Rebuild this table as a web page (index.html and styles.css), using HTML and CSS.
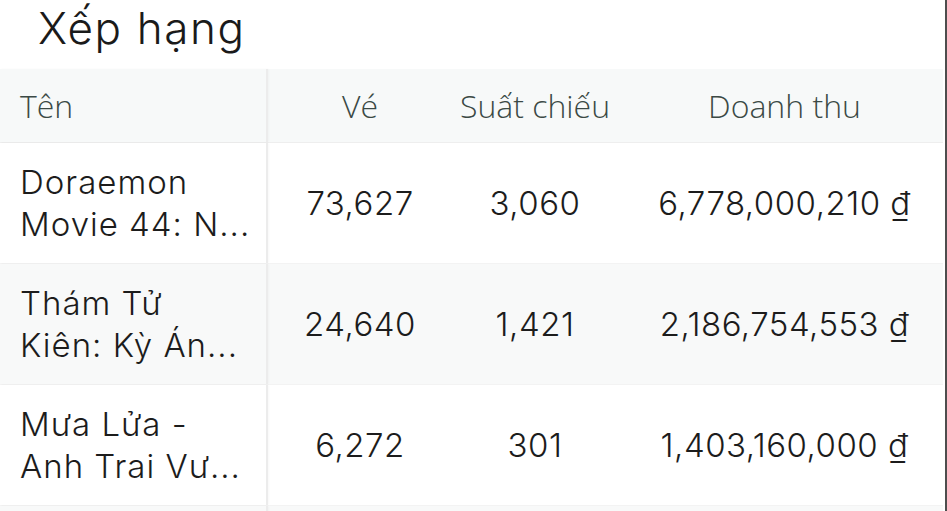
FILE: index.html
```html
<!DOCTYPE html>
<html lang="vi">
<head>
<meta charset="utf-8">
<title>Xếp hạng</title>
<link rel="stylesheet" href="styles.css">
</head>
<body>
<div class="frame">
  <h1 class="title">Xếp hạng</h1>
  <div class="table">
    <div class="row head">
      <div class="cell name">Tên</div>
      <div class="cell">Vé</div>
      <div class="cell">Suất chiếu</div>
      <div class="cell money">Doanh thu</div>
    </div>
    <div class="row">
      <div class="cell name"><span class="clamp">Doraemon<br>Movie 44: N...</span></div>
      <div class="cell">73,627</div>
      <div class="cell">3,060</div>
      <div class="cell money">6,778,000,210 ₫</div>
    </div>
    <div class="row alt">
      <div class="cell name"><span class="clamp">Thám Tử<br>Kiên: Kỳ Án...</span></div>
      <div class="cell">24,640</div>
      <div class="cell">1,421</div>
      <div class="cell money">2,186,754,553 ₫</div>
    </div>
    <div class="row">
      <div class="cell name"><span class="clamp">Mưa Lửa -<br>Anh Trai Vư...</span></div>
      <div class="cell">6,272</div>
      <div class="cell">301</div>
      <div class="cell money">1,403,160,000 ₫</div>
    </div>
    <div class="row alt tail">
      <div class="cell name"></div>
      <div class="cell"></div>
      <div class="cell"></div>
      <div class="cell money"></div>
    </div>
  </div>
</div>
</body>
</html>
```

FILE: styles.css
```css
html, body {
  margin: 0;
  padding: 0;
  background: #ffffff;
}
body {
  font-family: Inter, "Noto Sans", sans-serif;
  color: #1c1c1c;
  overflow: hidden;
}
.frame {
  width: 943px;
  height: 511px;
  border-right: 2px solid #4d4d4d;
  padding-right: 2px;
  overflow: hidden;
}
.title {
  margin: 0;
  padding: 4px 0 0 38px;
  height: 65px;
  font-weight: 300;
  font-size: 44px;
  line-height: 48px;
  letter-spacing: 1.6px;
  color: #1a1a1a;
}
.table {
  display: flex;
  flex-direction: column;
}
.row {
  display: grid;
  grid-template-columns: 268px 184px 166px 325px;
  height: 121px;
  background: #ffffff;
  border-bottom: 1px solid #f3f3f3;
  box-sizing: border-box;
}
.row.alt {
  background: #f8f9f9;
}
.row.head {
  height: 74px;
  background: #f7f9f9;
  border-bottom: 1px solid #eeeeee;
}
.row.tail {
  height: 30px;
}
.cell {
  display: flex;
  align-items: center;
  justify-content: center;
  font-size: 33px;
  font-weight: 300;
  letter-spacing: 0.5px;
}
.cell.money {
  padding-left: 8px;
}
.cell.name {
  justify-content: flex-start;
  padding-left: 20px;
  border-right: 2px solid #ececec;
  box-shadow: 1px 0 2px rgba(0, 0, 0, 0.03);
  line-height: 42px;
  letter-spacing: 1px;
}
.head .cell {
  font-family: "Open Sans", "Noto Sans", sans-serif;
  font-size: 32px;
  font-weight: 300;
  color: #3b4945;
  letter-spacing: 0;
}
.clamp {
  display: -webkit-box;
  -webkit-box-orient: vertical;
  -webkit-line-clamp: 2;
  overflow: hidden;
}
```
